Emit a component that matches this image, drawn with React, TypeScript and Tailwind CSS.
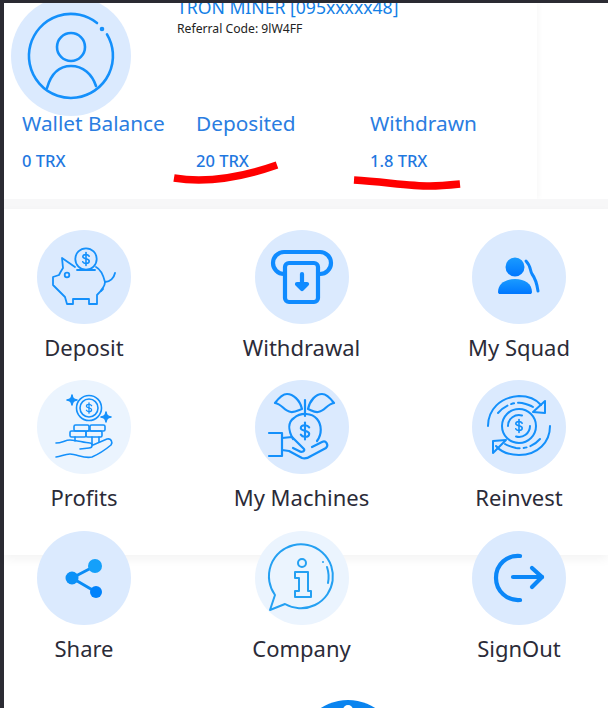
const BLUE = "#1490fb";

function Dollar({ x, y, s = 1, w = 2 }: { x: number; y: number; s?: number; w?: number }) {
  return (
    <g transform={`translate(${x} ${y}) scale(${s})`} fill="none" stroke={BLUE} strokeWidth={w} strokeLinecap="round">
      <path d="M4 -3.5C3 -5 1.5 -5.5 0 -5.5C-2.5 -5.5 -4 -4.2 -4 -2.7C-4 0 4 -0.5 4 2.5C4 4.2 2.5 5.5 0 5.5C-1.8 5.5 -3.2 4.8 -4 3.5" />
      <path d="M0 -8V8" />
    </g>
  );
}

function Icon({ children }: { children: React.ReactNode }) {
  return (
    <svg viewBox="0 0 94 94" className="h-full w-full" fill="none" stroke={BLUE} strokeLinecap="round" strokeLinejoin="round">
      {children}
    </svg>
  );
}

const PiggyIcon = () => (
  <Icon>
    <g strokeWidth="1.8">
      <circle cx="49" cy="29" r="10.7" />
      <Dollar x={49} y={29} s={0.8} w={2} />
      <path d="M38 37L25 28L26 38C24 41 23 43 22 45L16 47V55L28 67L30 74H36V69H52V74H60V65C65 60 68 56 68 52C66 44 63 39 59 37" />
      <path d="M40 40H58" />
      <path d="M68 52C73 52 77 48 78 43" />
      <path d="M64 61L66 59" />
      <circle cx="30" cy="45" r="2.3" />
    </g>
  </Icon>
);

const WithdrawIcon = () => (
  <Icon>
    <g strokeWidth="4.2" stroke="#0f8bff">
      <path d="M29 44A11 11 0 0 1 29 22H65A11 11 0 0 1 65 44" />
      <rect x="30" y="33" width="33" height="39" rx="4" fill="#dbeafe" />
      <path d="M47 44V58" />
      <path d="M42 54L47 59L52 54Z" fill="#0f8bff" />
    </g>
  </Icon>
);

const SquadIcon = () => (
  <Icon>
    <defs>
      <linearGradient id="squad" x1="0" y1="0" x2="0" y2="1">
        <stop offset="0" stopColor="#1a9bff" />
        <stop offset="1" stopColor="#0077ff" />
      </linearGradient>
    </defs>
    <circle cx="43" cy="37" r="9.5" fill="url(#squad)" stroke="none" />
    <path d="M26 62C26 54 33 49 43 49C53 49 60 54 60 62C60 63.500 59 64 58 64H28C27 64 26 63.500 26 62Z" fill="url(#squad)" stroke="none" />
    <path d="M54 31C59 36 58 41 60 44C63 48 65 54 66 61" strokeWidth="3" stroke="#0d88ff" />
  </Icon>
);

const ProfitsIcon = () => (
  <Icon>
    <g strokeWidth="1.6">
      <circle cx="52" cy="28" r="12.5" />
      <circle cx="52" cy="28" r="9" />
      <Dollar x={52} y={28} s={0.65} w={2} />
      <path d="M35 15C35.5 18.5 36.5 19.5 40 20C36.5 20.5 35.5 21.5 35 25C34.5 21.5 33.5 20.5 30 20C33.5 19.5 34.5 18.5 35 15Z" fill={BLUE} />
      <path d="M69 32C69.5 35.5 70.5 36.5 74 37C70.5 37.5 69.5 38.5 69 42C68.5 38.5 67.5 37.5 64 37C67.5 36.5 68.5 35.5 69 32Z" fill={BLUE} />
      <rect x="37" y="45" width="15" height="6" rx="1.5" />
      <rect x="53" y="45" width="15" height="6" rx="1.5" />
      <rect x="33" y="51" width="16" height="6" rx="1.5" />
      <rect x="49" y="51" width="16" height="6" rx="1.5" />
      <path d="M38 57V61M55 57V65M62 57V62" />
      <path d="M19 63C25 63 28 60 33 60C40 60 47 63 53 63C56 63 56 68 52 68L43 69" />
      <path d="M56 65L70 59C74 58 76 62 74 65C68 70 62 74 55 77C47 79 40 74 33 74C27 74 24 77 19 77" />
    </g>
  </Icon>
);

const MachinesIcon = () => (
  <Icon>
    <g strokeWidth="2.2">
      <path d="M47 29C45 20 38 14 32 14C27 14 23 19 20 23C27 24 29 31 36 32C40 32.500 44 30 47 29Z" />
      <path d="M53 29C55 20 61 14 67 14C72 14 76 19 79 23C72 24 70 31 63 32C59 32.500 56 30 53 29Z" />
      <path d="M50 20V36" />
      <path d="M38 59C33 50 33 42 39 38C46 32 57 33 62 39C67 45 67 54 62 61" />
      <Dollar x={50} y={51} s={1.05} w={2} />
      <path d="M14 53H27V76H14" />
      <path d="M27 58L37 57L49 69C50 71 47 73 44 71L38 68" />
      <path d="M27 70L34 71L47 78C50 79 53 78 56 76L71 68C74 65 71 60 67 62L57 67" />
    </g>
  </Icon>
);

const ReinvestIcon = () => (
  <Icon>
    <g strokeWidth="2">
      <circle cx="47" cy="46" r="17" />
      <path d="M36 46A11 11 0 0 1 50 35.500" />
      <path d="M58 46A11 11 0 0 1 44 56.500" />
      <Dollar x={47} y={46} s={0.8} w={2} />
      <path d="M16 46C16 30 28 17 47 16C55 16 63 18 69 25" />
      <path d="M26 33C33 25 42 22 50 23C54 24 58 25 61 27" strokeDasharray="12 4 3 4 30" />
      <path d="M73 21V33L61 32Z" />
      <path d="M78 46C78 62 66 75 47 75C39 75 30 73 24 66" />
      <path d="M68 59C61 67 52 69 44 68C40 67 36 66 33 64" strokeDasharray="12 4 3 4 30" />
      <path d="M21 61V73L34 60Z" />
    </g>
  </Icon>
);

const ShareIcon = () => (
  <Icon>
    <path d="M58 35L35 47L59 61" strokeWidth="3" stroke="#0b8cf5" />
    <circle cx="58" cy="35" r="7" fill="#14a0fa" stroke="none" />
    <circle cx="35" cy="47" r="6.500" fill="#0c91f7" stroke="none" />
    <circle cx="59" cy="61" r="6" fill="#0082fb" stroke="none" />
  </Icon>
);

const CompanyIcon = () => (
  <Icon>
    <g strokeWidth="2" stroke="#24a0f2">
      <path d="M15 79L20 64A32 32 0 1 1 30 73Z" />
      <circle cx="47" cy="32" r="4" />
      <path d="M40 41H53V60H56V66H40V60H44V47H40Z" />
      <path d="M72 36C74 42 74 47 73 52" />
      <path d="M68 31V31.100" />
    </g>
  </Icon>
);

const SignOutIcon = () => (
  <Icon>
    <g strokeWidth="4.2" stroke="#0b87f8">
      <path d="M48 25C35 24 24 33 24 47C24 60 35 70 48 69" />
      <path d="M41 46H70" />
      <path d="M60 37L70 46L60 56" />
    </g>
  </Icon>
);

function MenuItem({ label, light, children }: { label: string; light?: boolean; children: React.ReactNode }) {
  return (
    <div className="flex h-[150px] flex-col items-center">
      <div className={`h-[94px] w-[94px] shrink-0 rounded-full ${light ? "bg-[#ebf4fe]" : "bg-[#dbeafe]"}`}>{children}</div>
      <span className="mt-[9px] whitespace-nowrap text-[22px] leading-[28px] text-[#2b2b38]">{label}</span>
    </div>
  );
}

function Stat({ label, value }: { label: string; value: string }) {
  return (
    <div className="flex w-[174px] shrink-0 flex-col">
      <span className="text-[20.800px] leading-[30px] text-[#2a7de1]">{label}</span>
      <span className="mt-[13px] text-[16.500px] font-medium leading-[20px] text-[#1f78e0]">{value}</span>
    </div>
  );
}

const gridClass = "grid grid-cols-[94px_94px_94px] justify-between pl-[33px] pr-[42px]";

export default function App() {
  return (
    <div className="relative flex h-[708px] w-[608px] flex-col overflow-hidden bg-white font-['Noto_Sans',sans-serif]">
      <div className="h-[3px] shrink-0 bg-[#2b2b33]" />
      <div className="flex">
        <div className="w-[4px] shrink-0 bg-[#2b2b33]" />
        <div className="w-[604px]">
          <div className="h-[196px] w-[533px] overflow-hidden bg-white shadow-[2px_0_5px_rgba(0,0,0,0.03)]">
            <div className="flex items-start">
              <div className="ml-[7px] -mt-[7px] h-[120px] w-[120px] shrink-0 rounded-full bg-[#dbeafe]">
                <svg viewBox="0 0 120 120" className="h-full w-full" fill="none" stroke="#1490fb" strokeWidth="2.6" strokeLinecap="round">
                  <path d="M96 38.400A42 42 0 1 1 86 27" />
                  <circle cx="91" cy="33" r="1" fill="#1490fb" />
                  <circle cx="60" cy="51" r="14" />
                  <path d="M36 92C40 78 48 70 60 70C72 70 81 78 85 90" />
                </svg>
              </div>
              <div className="ml-[46px] flex flex-col">
                <span className="-mt-[8px] whitespace-nowrap text-[17.600px] leading-[24px] text-[#1280e6]">TRON MINER [095xxxxx48]</span>
                <span className="mt-[2px] text-[12.200px] leading-[16px] text-[#222]">Referral Code: 9lW4FF</span>
              </div>
            </div>
            <div className="-mt-[8px] flex pl-[18px]">
              <Stat label="Wallet Balance" value="0 TRX" />
              <Stat label="Deposited" value="20 TRX" />
              <Stat label="Withdrawn" value="1.8 TRX" />
            </div>
          </div>
          <div className="h-[10px] bg-[#f7f7f8]" />
          <div className="h-[346px] bg-white pt-[21px] shadow-[0_4px_10px_rgba(0,0,0,0.05)]">
            <div className={gridClass}>
              <MenuItem label="Deposit"><PiggyIcon /></MenuItem>
              <MenuItem label="Withdrawal"><WithdrawIcon /></MenuItem>
              <MenuItem label="My Squad"><SquadIcon /></MenuItem>
              <MenuItem label="Profits" light><ProfitsIcon /></MenuItem>
              <MenuItem label="My Machines"><MachinesIcon /></MenuItem>
              <MenuItem label="Reinvest"><ReinvestIcon /></MenuItem>
            </div>
          </div>
          <div className={`relative -mt-[24px] ${gridClass}`}>
            <MenuItem label="Share"><ShareIcon /></MenuItem>
            <MenuItem label="Company" light><CompanyIcon /></MenuItem>
            <MenuItem label="SignOut"><SignOutIcon /></MenuItem>
          </div>
          <div className="mt-[19px] flex justify-center pl-[84px]">
            <div className="flex h-[100px] w-[100px] shrink-0 justify-center rounded-full bg-[#0a84ef] pt-[5px]">
              <div className="h-[10px] w-[10px] rounded-full bg-white" />
            </div>
          </div>
        </div>
      </div>
      {/* red marker strokes drawn over the screenshot */}
      <svg className="pointer-events-none absolute left-0 top-0 h-[708px] w-[608px]" viewBox="0 0 608 708" fill="none" stroke="#f00" strokeWidth="7.500">
        <path d="M174 178C205 183 240 178 277 165" />
        <path d="M354 180C385 182 410 186 430 186C440 186 450 185 460 184" />
      </svg>
    </div>
  );
}
